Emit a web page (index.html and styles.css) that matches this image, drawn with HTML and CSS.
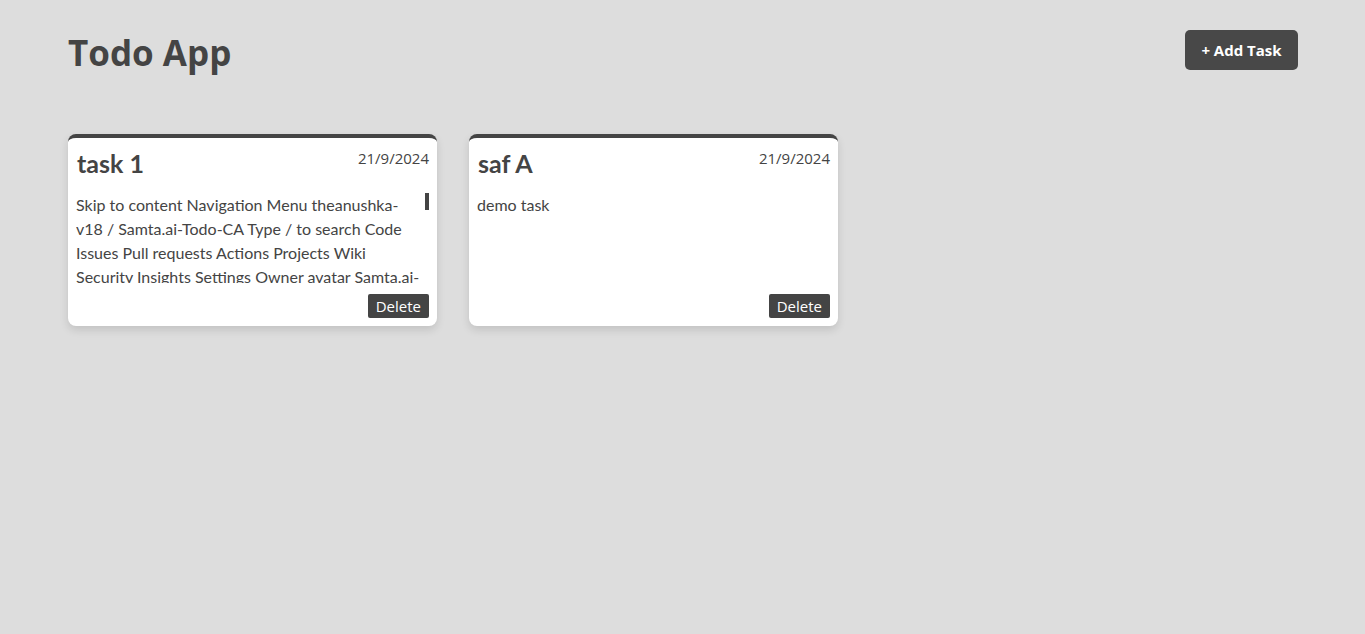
FILE: index.html
```html
<!DOCTYPE html>
<html lang="en">
<head>
<meta charset="utf-8">
<title>Todo App</title>
<link rel="stylesheet" href="styles.css">
</head>
<body>
<div class="app">
  <header class="header">
    <h1 class="title">Todo App</h1>
    <button class="add-btn">+ Add Task</button>
  </header>
  <main class="cards">
    <div class="card">
      <div class="card-head">
        <h2 class="card-title">task 1</h2>
        <span class="card-date">21/9/2024</span>
      </div>
      <div class="desc-wrap">
        <p class="card-desc">Skip to content Navigation Menu theanushka-v18 / Samta.ai-Todo-CA Type / to search Code Issues Pull requests Actions Projects Wiki Security Insights Settings Owner avatar Samta.ai-Todo-CA Public Pin Unwatch 1 Fork 0 Star 0 theanushka-v18/Samta.ai-Todo-CA Go to file t Add file Folders and files Name Latest commit theanushka-v18 theanushka-v18 Update README.md History 3 Commits public Initial commit src Initial commit .gitignore Initial commit README.md Update README.md package-lock.json Initial commit package.json Initial commit Repository files navigation README Todo App This is a simple Todo application built with React that allows users to manage their tasks effectively.</p>
        <span class="scroll-thumb"></span>
      </div>
      <div class="card-foot">
        <button class="del-btn">Delete</button>
      </div>
    </div>
    <div class="card">
      <div class="card-head">
        <h2 class="card-title">saf A</h2>
        <span class="card-date">21/9/2024</span>
      </div>
      <div class="desc-wrap">
        <p class="card-desc">demo task</p>
      </div>
      <div class="card-foot">
        <button class="del-btn">Delete</button>
      </div>
    </div>
  </main>
</div>
</body>
</html>
```
FILE: styles.css
```css
* { box-sizing: border-box; }
html, body { margin: 0; padding: 0; }
body {
  background: #dddddd;
  color: #444444;
  font-family: Lato, "Open Sans", sans-serif;
  font-size: 16px;
  height: 634px;
}
.app { padding: 30px 67px 30px 68px; }
.header {
  display: flex;
  justify-content: space-between;
  align-items: center;
  height: 40px;
}
.title {
  margin: 6px 0 0;
  font-family: "Open Sans", sans-serif;
  font-size: 35px;
  font-weight: 700;
  color: #444444;
  line-height: 40px;
}
.add-btn {
  font-family: "Open Sans", sans-serif;
  background: #484848;
  color: #ffffff;
  border: none;
  border-radius: 5px;
  font-size: 15px;
  font-weight: 700;
  width: 113px;
  height: 40px;
  padding: 0;
}
.cards {
  display: flex;
  gap: 32px;
  margin-top: 64px;
}
.card {
  width: 369px;
  height: 192px;
  background: #ffffff;
  border-top: 4px solid #444444;
  border-radius: 8px;
  box-shadow: 0 4px 8px rgba(0,0,0,0.12);
  padding: 8px;
  display: flex;
  flex-direction: column;
}
.card-head {
  display: flex;
  justify-content: space-between;
  align-items: flex-start;
}
.card-title {
  margin: 0;
  font-family: Lato, "Open Sans", sans-serif;
  font-size: 25px;
  font-weight: 700;
  line-height: 34px;
  padding-left: 1px;
}
.card-date {
  font-family: "Open Sans", sans-serif;
  font-size: 15px;
  line-height: 24px;
}
.desc-wrap {
  position: relative;
  margin-top: 13px;
}
.card-desc {
  margin: 0;
  height: 90px;
  overflow: hidden;
  line-height: 24px;
  font-size: 16px;
  padding-right: 4px;
}
.scroll-thumb {
  position: absolute;
  right: 0;
  top: 0;
  width: 4px;
  height: 17px;
  background: #444444;
}
.card-foot {
  margin-top: auto;
  display: flex;
  justify-content: flex-end;
}
.del-btn {
  font-family: "Open Sans", sans-serif;
  background: #444444;
  color: #ffffff;
  border: none;
  border-radius: 2px;
  font-size: 15px;
  height: 24px;
  padding: 0 8px;
}
```
